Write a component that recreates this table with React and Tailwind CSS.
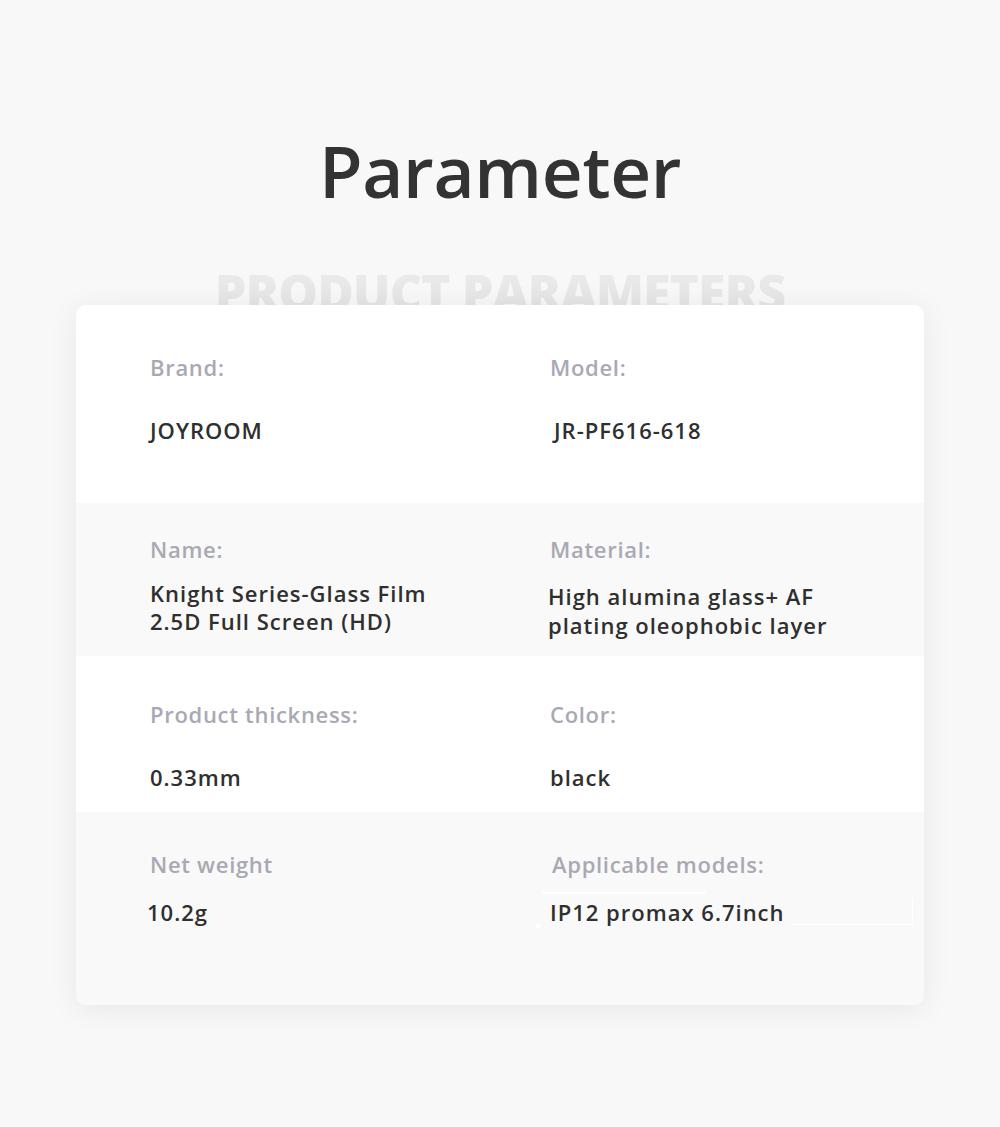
const font = { fontFamily: '"Open Sans", "Liberation Sans", sans-serif' };

/* ============ One parameter cell ============ */
function Cell({ label, lines, top, gap, leading = "leading-[28px]", shift = "" }) {
  return (
    <div className={`flex flex-col ${top}`}>
      <span className="text-[22px] leading-[26px] font-semibold tracking-[0.7px] text-[#a9a9b4]">{label}</span>
      <div className={`${gap} ${shift} text-[22px] ${leading} font-semibold tracking-[1px] text-[#2f2f2f]`}>
        {lines.map((l) => (
          <div key={l}>{l}</div>
        ))}
      </div>
    </div>
  );
}

export default function App() {
  return (
    <div className="w-[1000px] h-[1127px] bg-[#f8f8f8] flex flex-col items-center" style={font}>
      {/* Heading */}
      <h1 className="pt-[126px] text-[71px] leading-[90px] font-semibold text-[#333333] tracking-[-0.3px]">
        Parameter
      </h1>

      {/* Watermark subtitle, partly hidden by the card */}
      <div className="mt-[46px] h-[60px] text-[50px] leading-[60px] font-extrabold tracking-[-1px] bg-gradient-to-b from-[#ececec] to-[#e2e2e2] bg-clip-text text-transparent">
        PRODUCT PARAMETERS
      </div>

      {/* Card */}
      <div className="relative -mt-[17px] w-[848px] h-[700px] bg-white rounded-[10px] overflow-hidden shadow-[0_4px_30px_rgba(0,0,0,0.07)]">
        <div className="grid grid-cols-[400px_1fr] h-[198px] pl-[74px]">
          <Cell label="Brand:" lines={["JOYROOM"]} top="pt-[49px]" gap="mt-[36px]" />
          <Cell label="Model:" lines={["JR-PF616-618"]} top="pt-[49px]" gap="mt-[36px]" shift="pl-[4px]" />
        </div>
        <div className="grid grid-cols-[400px_1fr] h-[153px] pl-[74px] bg-[#f9f9f9]">
          <Cell label="Name:" lines={["Knight Series-Glass Film", "2.5D Full Screen (HD)"]} top="pt-[33px]" gap="mt-[17px]" />
          <Cell
            label="Material:"
            lines={["High alumina glass+ AF", "plating oleophobic layer"]}
            top="pt-[33px]"
            gap="mt-[20px]"
            leading="leading-[29px]"
            shift="-ml-[2px]"
          />
        </div>
        <div className="grid grid-cols-[400px_1fr] h-[156px] pl-[74px]">
          <Cell label="Product thickness:" lines={["0.33mm"]} top="pt-[45px]" gap="mt-[36px]" />
          <Cell label="Color:" lines={["black"]} top="pt-[45px]" gap="mt-[36px]" />
        </div>
        <div className="relative grid grid-cols-[400px_1fr] h-[193px] pl-[74px] bg-[#f9f9f9]">
          <Cell label="Net weight" lines={["10.2g"]} top="pt-[39px]" gap="mt-[21px]" shift="-ml-[3px]" />
          <Cell label="Applicable models:" lines={["IP12 promax 6.7inch"]} top="pt-[39px] pl-[2px]" gap="mt-[21px]" shift="-ml-[2px]" />
          {/* faint leftover edit marks around the last value */}
          <div className="absolute left-[466px] top-[80px] w-[164px] h-[2px] bg-white" />
          <div className="absolute left-[713px] top-[112px] w-[124px] h-px bg-white" />
          <div className="absolute left-[836px] top-[87px] w-px h-[28px] bg-white" />
          <div className="absolute left-[460px] top-[112px] w-[4px] h-[4px] bg-white" />
        </div>
      </div>
    </div>
  );
}
